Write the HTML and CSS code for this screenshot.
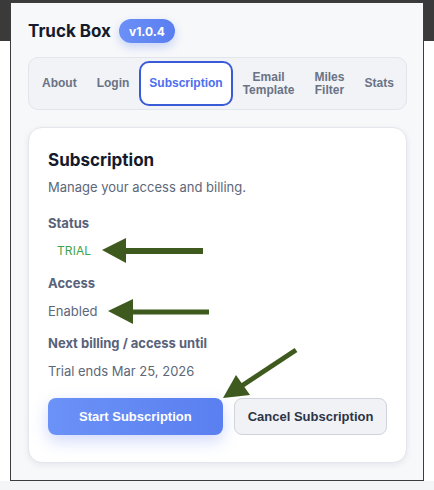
FILE: index.html
```html
<!DOCTYPE html>
<html>
<head>
<meta charset="utf-8">
<link rel="stylesheet" href="styles.css">
</head>
<body>
<div class="popup">
  <header class="head">
    <h1 class="title">Truck Box</h1>
    <span class="badge">v1.0.4</span>
  </header>
  <nav class="tabs">
    <button class="tab">About</button>
    <button class="tab">Login</button>
    <button class="tab active">Subscription</button>
    <button class="tab">Email<br>Template</button>
    <button class="tab">Miles<br>Filter</button>
    <button class="tab">Stats</button>
  </nav>
  <section class="card">
    <h2 class="card-title">Subscription</h2>
    <p class="desc">Manage your access and billing.</p>
    <div class="field first">
      <div class="label">Status</div>
      <div class="value status">TRIAL</div>
    </div>
    <div class="field">
      <div class="label">Access</div>
      <div class="value">Enabled</div>
    </div>
    <div class="field">
      <div class="label">Next billing / access until</div>
      <div class="value">Trial ends Mar 25, 2026</div>
    </div>
    <div class="actions">
      <button class="btn primary">Start Subscription</button>
      <button class="btn secondary">Cancel Subscription</button>
    </div>
  </section>
</div>
<svg class="arrows" width="434" height="490" viewBox="0 0 434 490">
  <g fill="#3f5a1e" stroke="#3f5a1e">
    <line x1="203" y1="251" x2="122" y2="251" stroke-width="6"/>
    <polygon points="102,250 126,238 126,263" stroke="none"/>
    <line x1="209" y1="312" x2="130" y2="312" stroke-width="5"/>
    <polygon points="108,311 133,299 133,324" stroke="none"/>
    <line x1="296" y1="350" x2="240" y2="387" stroke-width="5"/>
    <polygon points="223,398 236,375 250,395" stroke="none"/>
  </g>
</svg>
</body>
</html>
```
FILE: styles.css
```css
html, body {
  margin: 0;
  height: 490px;
  overflow: hidden;
}
body {
  position: relative;
  box-sizing: border-box;
  padding: 2px 0 0 10px;
  background: linear-gradient(to bottom, #3a3a3a 0 41px, #ffffff 41px 481px, #f4f5f7 481px);
  font-family: Inter, "Noto Sans", sans-serif;
}
.popup {
  box-sizing: border-box;
  width: 414px;
  height: 479px;
  border: 1px solid #3d3d3d;
  background: #f7f8fa;
  padding: 16px 16px 0 17px;
}
.head {
  display: flex;
  align-items: center;
  gap: 8px;
  height: 24px;
}
.title {
  margin: 0;
  font-size: 17px;
  font-weight: 700;
  color: #151b2c;
}
.badge {
  display: inline-flex;
  align-items: center;
  height: 24px;
  padding: 0 10px;
  border-radius: 12px;
  background: linear-gradient(90deg, #6b90f6, #5a7ef0);
  color: #fff;
  font-size: 12px;
  font-weight: 700;
  box-shadow: 0 4px 10px rgba(90, 126, 240, 0.3);
}
.tabs {
  display: flex;
  align-items: stretch;
  margin-top: 14px;
  height: 53px;
  box-sizing: border-box;
  padding: 3px;
  border: 1px solid #e1e5ec;
  border-radius: 10px;
  background: #f1f3f7;
}
.tab {
  font-family: "Liberation Sans", Arial, sans-serif;
  font-size: 12px;
  font-weight: 700;
  line-height: 13px;
  color: #6a7285;
  background: transparent;
  border: 2px solid transparent;
  border-radius: 10px;
  padding: 0 8px;
  margin: 0;
  text-align: center;
  white-space: nowrap;
}
.tab.active {
  background: #fff;
  border-color: #3a5bd6;
  color: #4b6ef0;
}
.card {
  margin-top: 17px;
  box-sizing: border-box;
  height: 336px;
  padding: 21px 19px 0 19px;
  border: 1px solid #e3e6ec;
  border-radius: 14px;
  background: #fff;
  box-shadow: 0 2px 6px rgba(20, 30, 50, 0.08);
}
.card-title {
  margin: 0;
  font-size: 17px;
  line-height: 22px;
  font-weight: 700;
  color: #141a2b;
}
.desc {
  margin: 7px 0 0;
  font-size: 13px;
  line-height: 18px;
  color: #5d6779;
}
.field {
  margin-top: 13px;
}
.field.first {
  margin-top: 18px;
}
.label {
  font-size: 13px;
  line-height: 18px;
  font-weight: 700;
  color: #58627a;
}
.value {
  margin-top: 9px;
  font-size: 13px;
  line-height: 20px;
  color: #5d6779;
}
.status {
  padding-left: 9px;
  font-size: 12px;
  letter-spacing: 0.1px;
  color: #3fa34a;
}
.actions {
  display: flex;
  gap: 11px;
  margin-top: 17px;
}
.btn {
  font-family: "Liberation Sans", Arial, sans-serif;
  font-size: 13px;
  font-weight: 700;
  height: 37px;
  border-radius: 8px;
  margin: 0;
  white-space: nowrap;
  flex: none;
}
.primary {
  padding: 0 31px;
  border: none;
  color: #fff;
  background: linear-gradient(90deg, #6b92f7, #5a7ff0);
  box-shadow: 0 6px 16px rgba(90, 120, 240, 0.28);
}
.secondary {
  padding: 0 13px;
  border: 1px solid #cfd3da;
  color: #2d3446;
  background: #f1f2f5;
}
.arrows {
  position: absolute;
  left: 0;
  top: 0;
  pointer-events: none;
}
```
